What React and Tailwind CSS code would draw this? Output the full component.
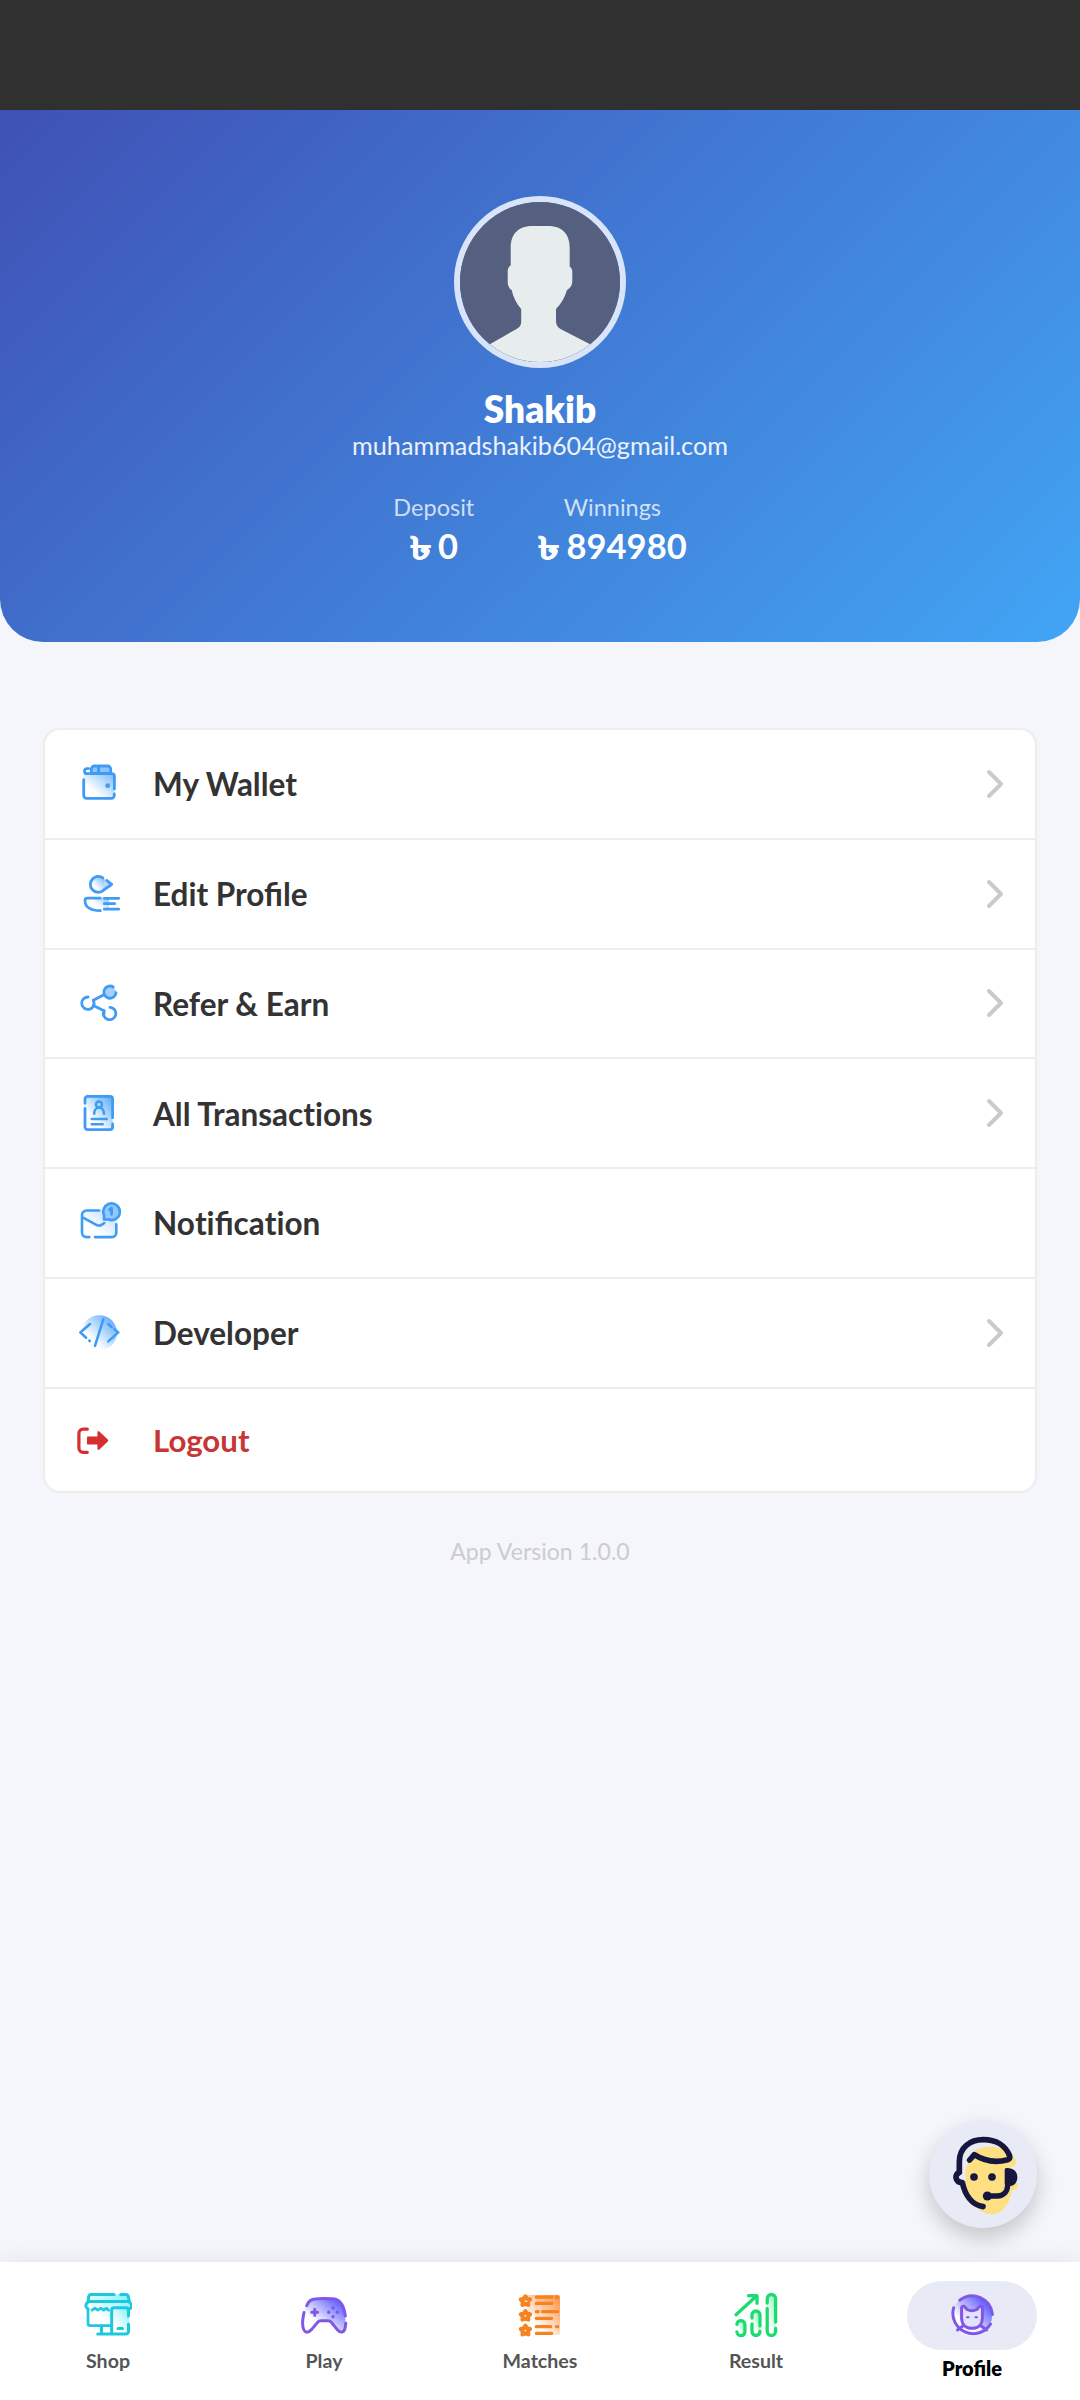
const BLUE = '#3f9bf3'

function IconBase({ children, color = BLUE, strokeWidth = 2.8, gradient, from, to }) {
  return (
    <svg
      width="48"
      height="48"
      viewBox="0 0 48 48"
      fill="none"
      stroke={color}
      strokeWidth={strokeWidth}
      strokeLinecap="round"
      strokeLinejoin="round"
      className="shrink-0"
    >
      {gradient && (
        <defs>
          <linearGradient id={gradient} x1="0.1" y1="0.9" x2="0.9" y2="0.1">
            <stop offset="0.25" stopColor={from} />
            <stop offset="1" stopColor={to} />
          </linearGradient>
        </defs>
      )}
      {children}
    </svg>
  )
}

function WalletIcon() {
  return (
    <IconBase gradient="wallet" from="#ffffff" to="#8cc4fb">
      <rect x="9.7" y="13.7" width="30.6" height="24.6" rx="2" fill="url(#wallet)" stroke="none" />
      <path d="M17.3 13.5V9a3 3 0 0 1 3-3h13.4a3 3 0 0 1 3 3v4.5z" fill="#8cc4fb" />
      <path d="M24.6 6.5v7" strokeWidth="3" />
      <path d="M14.6 8.6h-1.8c-3.2 0-3.2 5.1.4 5.1h24.6a2.6 2.6 0 0 1 2.6 2.6V29" />
      <path d="M9.7 19.7v15.8a2.8 2.8 0 0 0 2.8 2.8h25a2.8 2.8 0 0 0 2.8-2.8v-1.6" />
      <circle cx="33.7" cy="25.7" r="2.4" fill={BLUE} stroke="none" />
    </IconBase>
  )
}

function EditProfileIcon() {
  return (
    <IconBase gradient="edit" from="#ffffff" to="#7bbbfa">
      <circle cx="24.5" cy="14.3" r="7.8" fill="url(#edit)" stroke="none" />
      <path d="M30 10.5l7.7 3.8L30 19z" fill="#b5d9fc" stroke="none" />
      <path d="M29 8a7.9 7.9 0 1 0-.2 12.8c2.7-2 6-4.3 8.9-6.5l-5-3.9" />
      <path d="M20 28h15v11.5H22z" fill="url(#edit)" stroke="none" opacity="0.8" />
      <path d="M26.3 28.2H13.5c-1.6 0-2.5.9-2.5 2.5 0 6.5 6 9.9 15.3 10" />
      <path d="M30.3 28.3h14.4M30.3 33.7h10.4M30.3 39.2h14.4" />
    </IconBase>
  )
}

function ShareIcon() {
  return (
    <IconBase>
      <circle cx="36" cy="13.2" r="6" fill="#a4d0fb" stroke="none" />
      <path d="M39.2 8a6.1 6.1 0 1 0 2.8 5.6" />
      <path d="M14 18a6.2 6.2 0 1 0 5.3 3.2" />
      <path d="M30 31.8a6.200 6.200 0 1 0 6-3.500" />
      <path d="M19.300 21.200 30 15.800M19.300 26.500 30 31.800V35" />
    </IconBase>
  )
}

function TransactionsIcon() {
  return (
    <IconBase gradient="transactions" from="#ffffff" to="#6db5fb">
      <rect x="11" y="7.4" width="27.6" height="33.3" rx="2.5" fill="url(#transactions)" stroke="none" />
      <path d="M11 14.300V10a2.600 2.600 0 0 1 2.600-2.600H36a2.600 2.600 0 0 1 2.600 2.600v18.700" />
      <path d="M11 19.500V38a2.600 2.600 0 0 0 2.600 2.600H36a2.600 2.600 0 0 0 2.600-2.600v-3" />
      <g strokeWidth="2.500">
        <circle cx="25" cy="15.600" r="3" />
        <path d="M20.200 24.700c.2-8.200 9.600-8.200 9.800 0M17.700 30h15M17.700 35.300h11" />
      </g>
    </IconBase>
  )
}

function NotificationIcon() {
  return (
    <IconBase strokeWidth={2.6} gradient="notification" from="#ffffff" to="#c3e0fd">
      <rect x="8" y="11.2" width="34.3" height="27.4" rx="4" fill="url(#notification)" stroke="none" />
      <path d="M25.300 11.500H12.500A4.500 4.500 0 0 0 8 16v17.600a4.500 4.500 0 0 0 4.500 4.500h2.800" />
      <path d="M21 38.100h16.800a4.500 4.500 0 0 0 4.500-4.500v-8.400" />
      <path d="M9 18.600l13.400 7.200c2 1.100 3.800 1 5.600-.2l2.300-1.600" />
      <path d="M30 20.400v-4.200a8.300 8.300 0 1 1 4.600 4.300z" fill="#93c8fb" />
      <path d="M35.600 10.700l2-1.600v6.200" strokeWidth="2.800" />
    </IconBase>
  )
}

function DeveloperIcon() {
  return (
    <IconBase strokeWidth={2.6} gradient="developer" from="#ffffff" to="#5dadfb">
      <circle cx="25.3" cy="23.8" r="17.6" fill="url(#developer)" stroke="none" />
      <path d="M16 15.100l-9.700 8.300 5.800 5.300M15.400 31.600l.4.500" />
      <path d="M29.300 10.300 21 36.800" />
      <path d="M34.300 15.100l3.400 3M40.500 20.200l3.800 3.200-10 9" />
    </IconBase>
  )
}

function LogoutIcon() {
  return (
    <IconBase color="#d3302f" strokeWidth={3.2}>
      <path d="M13.300 13.200H9.200a4.300 4.300 0 0 0-4.300 4.300v14.500a4.300 4.300 0 0 0 4.300 4.300h4.100" />
      <path
        d="M14.200 20.500h9.200v-4c0-1.300 1.200-1.700 2-.9l8.400 8a1.300 1.300 0 0 1 0 1.900l-8.400 8c-.8.800-2 .4-2-.900v-4h-9.200c-.8 0-1.200-.4-1.200-1.200v-5.700c0-.8.400-1.200 1.200-1.200z"
        fill="#d3302f"
        stroke="none"
      />
    </IconBase>
  )
}

function ShopIcon() {
  return (
    <IconBase color="#1cc9dc" strokeWidth={3} gradient="shop" from="#ffffff" to="#8ff3fb">
      <path d="M4 11l2-6.500h37l2 7v8H27v16H4z" fill="url(#shop)" stroke="none" />
      <rect x="28" y="18" width="17" height="26" rx="2" fill="url(#shop)" stroke="none" />
      <path d="M30 4.400H7.300A2.600 2.600 0 0 0 4.700 6.800L4 11.500M36.700 4.400h5a2.600 2.600 0 0 1 2.600 2.400l1 4.700M4 11.500h41.500" />
      <path d="M4 12c-2.600 2.200-3.200 5 0 7M45.300 12c2.300 2.200 2.600 4.600.6 6.800" />
      <path d="M4 19v14.200a2.500 2.500 0 0 0 2.500 2.500H26M8 20.200l3-2 2.800 2 3-2 2.900 2 2.800-2 2.200 2" strokeWidth="2.700" />
      <path d="M44.500 26V20.200a2.500 2.500 0 0 0-2.500-2.500H30.200a2.500 2.500 0 0 0-2.500 2.500V44H42a2.500 2.500 0 0 0 2.500-2.500V34M13.700 44H28M17.500 36v8" />
      <path d="M34 38.500h4.500" />
    </IconBase>
  )
}

function PlayIcon() {
  return (
    <IconBase color="#8157e8" strokeWidth={3} gradient="play" from="#ffffff" to="#5b5cff">
      <path
        d="M4 22C6 12 9 8.700 14 8.700h20c5 0 10 8 11.300 20 .5 10-4 16-10.300 8.600l-5.700-6.600h-10l-6 6.600C8 43 3 44 2.300 33z"
        fill="url(#play)"
        stroke="none"
      />
      <path d="M4 22.500C2.800 28 2.300 31 2.700 35c.6 7.800 4.600 9.100 9 4.400l6.200-7.400c.8-1 1.400-1.300 2.600-1.300h8c1.200 0 1.800.3 2.600 1.300l6 7.400c3.500 3.900 7.300 3.600 8.200-2.400.3-1.700.4-2.800.4-4" />
      <path d="M6.700 15.700C9 9.500 11.500 8.600 24 8.500c12.400 0 14.700.8 17.800 5.700 1.900 3.200 2.900 7.300 3.600 11.800" />
      <path d="M14.700 19.300v6M11.700 22.300h6" />
      <g fill="#8157e8" stroke="none">
        <circle cx="33" cy="18" r="1.700" />
        <circle cx="28.700" cy="22.300" r="1.700" />
        <circle cx="37.400" cy="22.300" r="1.700" />
        <circle cx="33" cy="26.700" r="1.700" />
      </g>
    </IconBase>
  )
}

const STAR = 'M0-4.300 1.700-1.700 4.700-1.100 2.600 1.300 3 4.400 0 3.200-3 4.400-2.600 1.300-4.700-1.100-1.700-1.700z'

function MatchesIcon() {
  return (
    <IconBase color="#f5831f" strokeWidth={3.2} gradient="matches" from="#ffffff" to="#ff9a52">
      <rect x="6" y="5" width="38" height="40" rx="2" fill="url(#matches)" stroke="none" />
      <path d="M20.300 7.200h15.400M40.500 7.200h1.200M20.300 13.400h15.400M20.300 21.700h2M26.500 21.700h15.200M20.300 28.300h15.400M20.300 36.700h14.400M40.500 36.700h1.200M20.300 43.300h15.400" />
      <g strokeWidth="4">
        <path d={STAR} transform="translate(9.400 10.600)" strokeDasharray="7 4 40" />
        <path d={STAR} transform="translate(9.400 25.300)" />
        <path d={STAR} transform="translate(9.400 40)" />
      </g>
    </IconBase>
  )
}

function ResultIcon() {
  return (
    <IconBase color="#1cdc70" strokeWidth={3.3} gradient="result" from="#ffffff" to="#8ff5be">
      <rect x="4.7" y="31" width="8" height="14.7" rx="4" fill="url(#result)" stroke="none" />
      <rect x="20" y="21" width="8" height="24.7" rx="4" fill="url(#result)" stroke="none" />
      <rect x="35.2" y="4.5" width="8.4" height="41" rx="4.2" fill="url(#result)" stroke="none" />
      <path d="M4 24.700 24.500 6M16.500 5.700H25v7.600" />
      <path d="M4.900 34.300a4 4 0 0 1 8 .6v6.500a4 4 0 0 1-8 .6" />
      <path d="M20 28v-3a4 4 0 0 1 8 0v11M20 34v7.500a4 4 0 0 0 8 0v-.300" />
      <path d="M35.200 13V8.700a4.200 4.200 0 0 1 8.400 0V32M35.200 18.500v22.800a4.200 4.200 0 0 0 8.400 0v-3" />
    </IconBase>
  )
}

function CatProfileIcon() {
  return (
    <IconBase color="#8157e8" strokeWidth={3} gradient="cat" from="#ffffff" to="#4f4dff">
      <circle cx="24" cy="24" r="20" fill="url(#cat)" stroke="none" />
      <path d="M9.500 38c8-5 21-5 29 0-8 8-21 8-29 0z" fill="#f4f1ff" stroke="none" />
      <path d="M11.800 8.200A20.300 20.300 0 0 1 44.400 22.400M42.500 32A20.300 20.300 0 0 1 5.700 15.700" />
      <path d="M13.600 16.500c0-3 2-3 3.600-1.200l1.800 2.200c2.800 1.400 7.200 1.400 10 0l1.800-2.200c1.600-1.800 3.600-1.800 3.600 1.200V26c0 6-3.800 10.300-10.400 10.300S13.600 32 13.600 26z" fill="#e3e3ff" />
      <path d="M9.500 38l5.300-4M38.500 38l-5.300-4" />
      <path d="M19 25.300h1.600M27.400 25.300H29" strokeWidth="2" />
    </IconBase>
  )
}

function SupportIcon() {
  return (
    <svg width="108" height="108" viewBox="0 0 324 324" fill="none" stroke="#15173f" strokeWidth="17" strokeLinecap="round" strokeLinejoin="round">
      <path
        d="M130 97c15-13 35-17 58-17 24 0 45 6 58 28 10 2 16 8 16 18 0 9-8 14-16 15v50c8-6 22-4 21 7-1 10-8 13-18 12-6 41-29 73-62 73-14 0-26-6-36-15-27-12-44-40-48-77 12-13 7-22 7-44z"
        fill="#fee083"
        stroke="none"
      />
      <path d="M91 155v-30c0-42 32-66 72-66 38 0 67 17 79 49 1 5-1 9-6 11-33 9-69 5-100-15l-14 16" />
      <path d="M91 157c-15 7-14 29 9 31 8 36 28 67 62 72" />
      <circle cx="135" cy="171" r="11.5" fill="#15173f" stroke="none" />
      <circle cx="189" cy="171" r="11.5" fill="#15173f" stroke="none" />
      <circle cx="175" cy="228" r="13.5" fill="#15173f" stroke="none" />
      <path d="M178 228h27c18 0 30-12 31-32" strokeWidth="16" />
      <path d="M227 150c0-4 3-6 7-6 20 0 31 11 31 28s-10 27-28 27c-6 0-10-3-10-9z" fill="#15173f" stroke="none" />
    </svg>
  )
}

function Avatar() {
  return (
    <svg width="160" height="160" viewBox="0 0 160 160">
      <rect width="160" height="160" fill="#556080" />
      <path
        d="M50.700 46C50.700 31 59 24 73 24h14.500c14 0 22.200 7 22.200 22v18.500c1.700 1 2.600 3 2.600 5.500v9c0 4-1.500 7-5.300 9-2.500 8-6 14-11 19v12c0 4 1.500 6 4.500 8l35 18v20H25v-20l31.500-18c3.500-2 4.700-4 4.700-8v-12c-5-5.500-8-12-9.500-19-2.500-1.500-4-4-4-8.500v-10c0-3 1-5 3-6z"
        fill="#e7eced"
      />
    </svg>
  )
}

function Chevron() {
  return (
    <svg width="20" height="32" viewBox="0 0 20 32" fill="none" stroke="#cacaca" strokeWidth="4" strokeLinecap="round" strokeLinejoin="round">
      <path d="M5 4 17 16 5 28" />
    </svg>
  )
}

const menuItems = [
  { label: 'My Wallet', icon: WalletIcon, chevron: true },
  { label: 'Edit Profile', icon: EditProfileIcon, chevron: true },
  { label: 'Refer & Earn', icon: ShareIcon, chevron: true },
  { label: 'All Transactions', icon: TransactionsIcon, chevron: true },
  { label: 'Notification', icon: NotificationIcon, chevron: false },
  { label: 'Developer', icon: DeveloperIcon, chevron: true },
]

const navItems = [
  { label: 'Shop', icon: ShopIcon },
  { label: 'Play', icon: PlayIcon },
  { label: 'Matches', icon: MatchesIcon },
  { label: 'Result', icon: ResultIcon },
]

// Keeps Lato's "fi" ligature but switches off the "ti" one
function MenuLabel({ text }) {
  return text.split(/(ti)/).map((part, i) =>
    part === 'ti' ? (
      <span key={i} className="[font-variant-ligatures:none]">
        {part}
      </span>
    ) : (
      part
    )
  )
}

function Balance({ label, amount }) {
  return (
    <div className="flex flex-col items-center">
      <span className="text-[23.5px] leading-[28px] text-white/75">{label}</span>
      <span className="mt-1 text-[34.5px] leading-[42px] font-bold">
        <span className="mr-[2px] ml-[3px] inline-block scale-x-140 text-[31px] leading-none [-webkit-text-stroke:0.6px_white]">৳</span>{' '}
        {amount}
      </span>
    </div>
  )
}

export default function App() {
  return (
    <div className="flex h-[2400px] w-[1080px] flex-col overflow-hidden bg-[#f4f6fb] font-['Lato','Noto_Sans',sans-serif]">
      <div className="h-[110px] shrink-0 bg-[#303030]" />

      {/* Profile header */}
      <header className="flex h-[532px] shrink-0 flex-col items-center rounded-b-[43px] bg-[linear-gradient(135deg,#3f51b5,#42a5f5)] pt-[86px] text-white">
        <div className="size-[172px] overflow-hidden rounded-full border-6 border-[#d9e4f8]">
          <Avatar />
        </div>
        <h1 className="mt-[20px] text-[37px] leading-[42px] font-extrabold">Shakib</h1>
        <p className="text-[25.2px] leading-[30px] text-white/90">muhammadshakib604@gmail.com</p>
        <div className="mt-[33px] flex gap-16">
          <Balance label="Deposit" amount="0" />
          <Balance label="Winnings" amount="894980" />
        </div>
      </header>

      <main className="flex flex-1 flex-col px-[43px] pt-[86px]">
        <div className="rounded-[17px] border-2 border-[#ededee] bg-white text-[31.5px] font-bold text-[#333]">
          {menuItems.map(({ label, icon: Icon, chevron }) => (
            <div key={label} className="flex h-[109.8px] items-center border-b-2 border-[#ededee] pr-[31px] pl-[29px]">
              <Icon />
              <span className="ml-[31px] flex-1 pt-0.5">
                <MenuLabel text={label} />
              </span>
              {chevron && <Chevron />}
            </div>
          ))}
          <div className="flex h-[102px] items-center pl-[29px] text-[31.2px] text-[#c73635]">
            <LogoutIcon />
            <span className="ml-[31px] pt-0.5">Logout</span>
          </div>
        </div>

        <p className="mt-[43px] text-center text-[23.1px] leading-[30px] text-[#cccccd]">App Version 1.0.0</p>

        <button className="mt-auto mb-[34px] size-[108px] self-end rounded-full bg-[#e8eaf6] shadow-[0_10px_22px_rgba(0,0,0,0.2)]">
          <SupportIcon />
        </button>
      </main>

      {/* Bottom navigation */}
      <nav className="flex h-[138px] shrink-0 bg-white shadow-[0_0_24px_rgba(0,0,0,0.08)]">
        {navItems.map(({ label, icon: Icon }) => (
          <div key={label} className="flex flex-1 flex-col items-center pt-7">
            <Icon />
            <span className="mt-[11px] text-[19.6px] leading-6 font-bold text-[#555]">{label}</span>
          </div>
        ))}
        <div className="flex flex-1 flex-col items-center pt-[19px]">
          <div className="flex h-[69px] w-[130px] items-center justify-center rounded-full bg-[#e8eaf6]">
            <CatProfileIcon />
          </div>
          <span className="mt-[6px] text-[20px] leading-6 font-extrabold text-black">Profile</span>
        </div>
      </nav>
    </div>
  )
}
